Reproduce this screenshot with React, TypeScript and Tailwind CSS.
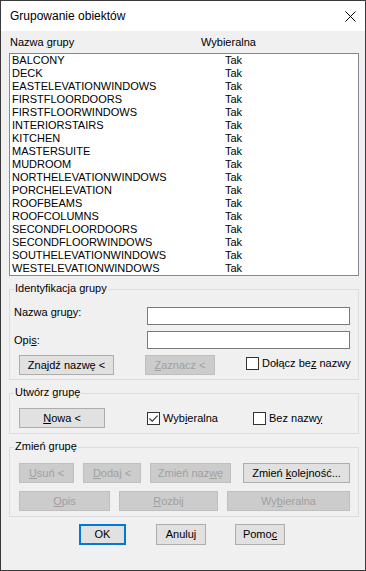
import React from 'react';

const groups = [
    'BALCONY',
    'DECK',
    'EASTELEVATIONWINDOWS',
    'FIRSTFLOORDOORS',
    'FIRSTFLOORWINDOWS',
    'INTERIORSTAIRS',
    'KITCHEN',
    'MASTERSUITE',
    'MUDROOM',
    'NORTHELEVATIONWINDOWS',
    'PORCHELEVATION',
    'ROOFBEAMS',
    'ROOFCOLUMNS',
    'SECONDFLOORDOORS',
    'SECONDFLOORWINDOWS',
    'SOUTHELEVATIONWINDOWS',
    'WESTELEVATIONWINDOWS',
];

// mnemonic letter, underlined the way Windows draws it
function U({children}: {children: React.ReactNode}) {
    return <span className="underline decoration-1 underline-offset-[1px]">{children}</span>;
}

function Btn({w, disabled, children}: {w: string; disabled?: boolean; children: React.ReactNode}) {
    return (
        <div
            className={`${w} h-[20px] shrink-0 flex items-center justify-center border leading-[13px] whitespace-nowrap ${
                disabled ? 'border-[#bfbfbf] bg-[#cccccc] text-[#a0a0a0]' : 'border-[#adadad] bg-[#e1e1e1] text-black'
            }`}
        >
            <span>{children}</span>
        </div>
    );
}

function Check({checked, children}: {checked?: boolean; children: React.ReactNode}) {
    return (
        <div className="flex items-center shrink-0">
            <div className="w-[13px] h-[13px] shrink-0 border border-[#333333] bg-white flex items-center justify-center">
                {checked && (
                    <svg width="11" height="11" viewBox="0 0 11 11">
                        <path d="M1.5 5.5 L4.2 8.2 L9.6 2.6" fill="none" stroke="#333333" strokeWidth="1.1"/>
                    </svg>
                )}
            </div>
            <span className="ml-[3px] leading-[13px] whitespace-nowrap">{children}</span>
        </div>
    );
}

function Group({title, className, children}: {title: string; className: string; children: React.ReactNode}) {
    return (
        <div className={`relative border border-[#dcdcdc] ${className}`}>
            <span className="absolute left-[4px] top-[-8px] px-[1px] bg-[#f0f0f0] leading-[13px]">{title}</span>
            {children}
        </div>
    );
}

export default function App() {
    return (
        <div className="w-[366px] h-[571px] border border-[#3a3a3a] bg-[#f0f0f0] flex flex-col font-['Liberation_Sans',Arial,sans-serif] text-[11px] text-black overflow-hidden">
            {/* title bar */}
            <div className="h-[30px] bg-white flex items-center justify-between pl-[9px] pr-[9px] shrink-0">
                <span className="text-[12px]">Grupowanie obiektów</span>
                <svg width="11" height="11" viewBox="0 0 11 11">
                    <path d="M0.5 0.5 L10.5 10.5 M10.5 0.5 L0.5 10.5" stroke="#000" strokeWidth="1"/>
                </svg>
            </div>

            <div className="pl-[8px] pr-[6px] pt-[5px] flex flex-col">
                <div className="flex pl-[1px] leading-[13px]">
                    <span className="w-[191px]">Nazwa <U>g</U>rupy</span>
                    <span>Wybieralna</span>
                </div>

                <div className="mt-[4px] h-[223px] border border-[#828790] bg-white pl-[2px]">
                    {groups.map(g => (
                        <div key={g} className="flex h-[13px] leading-[13px]">
                            <span className="w-[213px]">{g}</span>
                            <span>Tak</span>
                        </div>
                    ))}
                </div>

                <Group title="Identyfikacja grupy" className="mt-[13px] pt-[17px] pb-[4px] pl-[4px] pr-[8px]">
                    <div className="flex items-start">
                        <span className="w-[133px] leading-[13px] mt-[-1px]">Nazwa gru<U>p</U>y:</span>
                        <div className="w-[203px] h-[18px] border border-[#7a7a7a] bg-white"/>
                    </div>
                    <div className="flex items-start mt-[6px]">
                        <span className="w-[133px] leading-[13px] mt-[3px]">Opi<U>s</U>:</span>
                        <div className="w-[203px] h-[18px] border border-[#7a7a7a] bg-white"/>
                    </div>
                    <div className="flex items-center mt-[6px] ml-[5px]">
                        <Btn w="w-[95px]">Zna<U>j</U>dź nazwę &lt;</Btn>
                        <div className="ml-[31px]">
                            <Btn w="w-[70px]" disabled><U>Z</U>aznacz &lt;</Btn>
                        </div>
                        <div className="ml-[31px] mt-[-3px]">
                            <Check>Dołącz be<U>z</U> nazwy</Check>
                        </div>
                    </div>
                </Group>

                <Group title="Utwórz grupę" className="mt-[13px] pt-[14px] pb-[5px] pl-[9px]">
                    <div className="flex items-center">
                        <Btn w="w-[86px]"><U>N</U>owa &lt;</Btn>
                        <div className="ml-[42px] w-[106px]">
                            <Check checked>Wyb<U>i</U>eralna</Check>
                        </div>
                        <Check>Bez nazw<U>y</U></Check>
                    </div>
                </Group>

                <Group title="Zmień grupę" className="mt-[13px] pt-[15px] pb-[5px] pl-[9px]">
                    <div className="flex">
                        <Btn w="w-[55px]" disabled><U>U</U>suń &lt;</Btn>
                        <div className="ml-[9px]"><Btn w="w-[58px]" disabled><U>D</U>odaj &lt;</Btn></div>
                        <div className="ml-[9px]"><Btn w="w-[81px]" disabled>Zmień naz<U>w</U>ę</Btn></div>
                        <div className="ml-[12px]"><Btn w="w-[107px]">Zmień <U>k</U>olejność...</Btn></div>
                    </div>
                    <div className="flex mt-[8px]">
                        <Btn w="w-[91px]" disabled><U>O</U>pis</Btn>
                        <div className="ml-[9px]"><Btn w="w-[99px]" disabled><U>R</U>ozbij</Btn></div>
                        <div className="ml-[9px]"><Btn w="w-[123px]" disabled>Wy<U>b</U>ieralna</Btn></div>
                    </div>
                </Group>

                <div className="flex mt-[7px] pl-[70px]">
                    <div className="w-[47px] h-[21px] border-2 border-[#0078d7] bg-[#e1e1e1] flex items-center justify-center">OK</div>
                    <div className="ml-[30px] w-[50px] h-[21px] border border-[#adadad] bg-[#e1e1e1] flex items-center justify-center">Anuluj</div>
                    <div className="ml-[29px] w-[50px] h-[21px] border border-[#adadad] bg-[#e1e1e1] flex items-center justify-center">Pomo<U>c</U></div>
                </div>
            </div>
        </div>
    );
}
